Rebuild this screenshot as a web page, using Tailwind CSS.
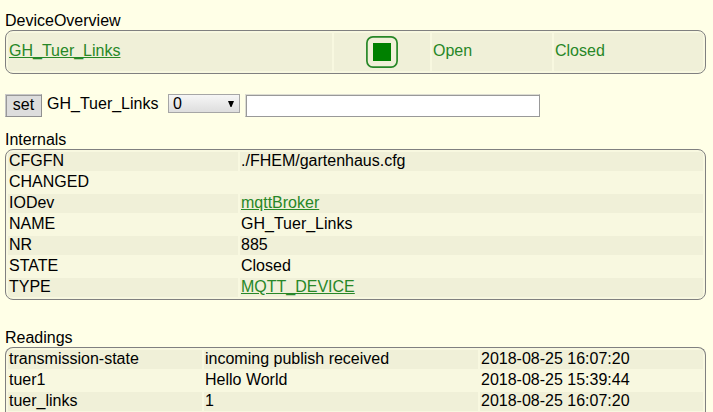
<!DOCTYPE html>
<html lang="en">
<head>
<meta charset="utf-8">
<title>GH_Tuer_Links</title>
<script src="https://cdn.jsdelivr.net/npm/@tailwindcss/browser@4"></script>
</head>
<body class="h-[412px] overflow-hidden bg-[#ffffe7] pl-[5px] pt-[11px] font-['Liberation_Sans',Arial,sans-serif] text-[16px] leading-[19px] text-black">
<main class="w-[701px]">
  <h2>DeviceOverview</h2>
  <div class="grid h-[44px] grid-cols-[324px_96px_120px_149px] gap-[2px] rounded-[8px] border border-[#808080] bg-[#f8f8e0] p-[2px] leading-[36px] text-[#278727] *:bg-[#f0f0d8] *:px-px">
    <div><a href="#" class="underline">GH_Tuer_Links</a></div>
    <div class="flex items-center justify-center">
      <svg class="h-8 w-8" viewBox="0 0 32 32"><rect x=".9" y=".9" width="30.2" height="30.2" rx="6" fill="none" stroke="#278727" stroke-width="1.7"/><rect x="7" y="7" width="18" height="18" fill="#008000"/></svg>
    </div>
    <div>Open</div>
    <div>Closed</div>
  </div>

  <form class="mt-[20px] flex h-[24px] items-start">
    <button type="button" class="h-[23px] w-[37px] border border-t-[#c8c8c8] border-l-[#c8c8c8] border-r-[#909090] border-b-[#909090] bg-[#dddddd] pb-[2px] leading-[19px] inset-shadow-[1px_1px_0_#999]">set</button>
    <span class="ml-[5px] w-[121px]">GH_Tuer_Links</span>
    <div class="flex h-[19px] w-[72px] items-center justify-between border border-[#a6a6a6] bg-linear-to-b from-[#f6f6f6] to-[#dedede] pl-[4px] pr-[5px] leading-[17px]">
      <span>0</span>
      <svg class="h-[6px] w-[6px]" viewBox="0 0 6 6"><path d="M0 0h6L3.5 6h-1z" fill="#000"/></svg>
    </div>
    <input type="text" class="ml-[5px] h-[23px] w-[295px] border border-t-[#dcdcd2] border-l-[#dcdcd2] border-r-[#999] border-b-[#999] bg-white inset-shadow-[1px_1px_0_#999]">
  </form>

  <h2 class="mt-[12px]">Internals</h2>
  <div class="flex h-[151px] flex-col gap-[2px] rounded-[8px] border border-[#808080] bg-[#f8f8e0] p-[2px] leading-[17px] *:grid *:h-[19px] *:grid-cols-[230px_463px] *:gap-[2px] *:odd:*:bg-[#f0f0d8] *:*:px-px">
    <div><div>CFGFN</div><div>./FHEM/gartenhaus.cfg</div></div>
    <div><div>CHANGED</div><div></div></div>
    <div><div>IODev</div><div><a href="#" class="text-[#278727] underline">mqttBroker</a></div></div>
    <div><div>NAME</div><div>GH_Tuer_Links</div></div>
    <div><div>NR</div><div>885</div></div>
    <div><div>STATE</div><div>Closed</div></div>
    <div><div>TYPE</div><div><a href="#" class="text-[#278727] underline">MQTT_DEVICE</a></div></div>
  </div>

  <h2 class="mt-[28px]">Readings</h2>
  <div class="flex h-[65px] flex-col gap-[2px] rounded-t-[8px] border border-b-0 border-[#808080] bg-[#f8f8e0] px-[2px] pt-[2px] leading-[17px] *:grid *:h-[19px] *:shrink-0 *:grid-cols-[194px_274px_223px] *:gap-[2px] *:odd:*:bg-[#f0f0d8] *:*:px-px">
    <div><div>transmission-state</div><div>incoming publish received</div><div>2018-08-25 16:07:20</div></div>
    <div><div>tuer1</div><div>Hello World</div><div>2018-08-25 15:39:44</div></div>
    <div><div>tuer_links</div><div>1</div><div>2018-08-25 16:07:20</div></div>
  </div>
</main>
</body>
</html>
